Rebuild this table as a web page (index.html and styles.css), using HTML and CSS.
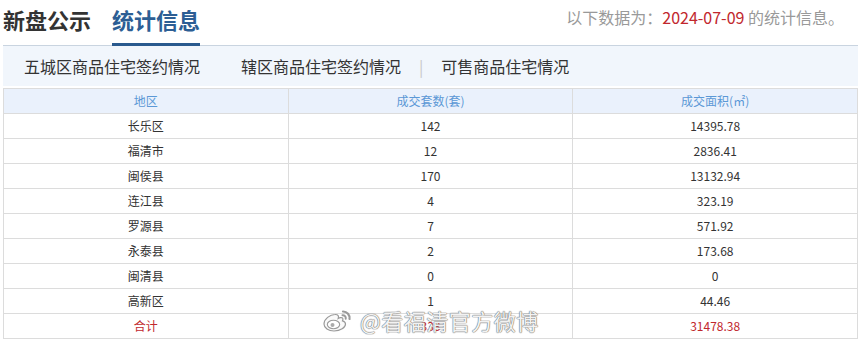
FILE: index.html
```html
<!DOCTYPE html>
<html lang="zh-CN">
<head>
<meta charset="utf-8">
<title>统计信息</title>
<link rel="stylesheet" href="styles.css">
</head>
<body>
<div class="page">
  <div class="head">
    <div class="ht">新盘公示</div>
    <div class="ht active">统计信息</div>
    <div class="info">以下数据为：<span class="date">2024-07-09</span> 的统计信息。</div>
  </div>
  <div class="tabs">
    <span class="tab first">五城区商品住宅签约情况</span>
    <span class="tab second">辖区商品住宅签约情况</span>
    <span class="sep">|</span>
    <span class="tab">可售商品住宅情况</span>
  </div>
  <table class="grid">
    <thead>
      <tr><th>地区</th><th>成交套数(套)</th><th>成交面积(㎡)</th></tr>
    </thead>
    <tbody>
      <tr><td>长乐区</td><td>142</td><td>14395.78</td></tr>
      <tr><td>福清市</td><td>12</td><td>2836.41</td></tr>
      <tr><td>闽侯县</td><td>170</td><td>13132.94</td></tr>
      <tr><td>连江县</td><td>4</td><td>323.19</td></tr>
      <tr><td>罗源县</td><td>7</td><td>571.92</td></tr>
      <tr><td>永泰县</td><td>2</td><td>173.68</td></tr>
      <tr><td>闽清县</td><td>0</td><td>0</td></tr>
      <tr><td>高新区</td><td>1</td><td>44.46</td></tr>
      <tr class="total"><td>合计</td><td>338</td><td>31478.38</td></tr>
    </tbody>
  </table>
  <div class="watermark">
    <svg class="wb" viewBox="0 0 32 26" width="32" height="26" aria-hidden="true">
      <path d="M13 7.5c-5 0-11 4.5-11 9.5 0 4 4.5 7 10 7 6.5 0 11.5-3.5 11.5-7 0-2-1.5-2.8-3-3.2 1-2.2 0.3-3.5-2-3.2-1.2 0.2-2.3 0.8-2.3 0.8 0.8-2.3 0.2-4-3.2-3.9z" fill="#fafafa" stroke="#9a9a9a" stroke-width="1.2"/>
      <ellipse cx="11.5" cy="17.5" rx="6.2" ry="4.2" fill="#fff" stroke="#9a9a9a" stroke-width="1.1"/>
      <circle cx="10.5" cy="18" r="2" fill="#aaa"/>
      <path d="M21 4.5a6.5 6.5 0 0 1 6.5 7.5" fill="none" stroke="#9a9a9a" stroke-width="2.2" stroke-linecap="round"/>
      <path d="M20.5 8.2a3 3 0 0 1 3.2 3.6" fill="none" stroke="#9a9a9a" stroke-width="2" stroke-linecap="round"/>
    </svg>
    <span class="wtext">@看福清官方微博</span>
  </div>
</div>
</body>
</html>
```

FILE: styles.css
```css
* { box-sizing: border-box; }
html, body { margin: 0; padding: 0; background: #fff; }
body {
  font-family: "Microsoft YaHei", "Noto Sans CJK SC", "Noto Sans", sans-serif;
  color: #333;
}
.page {
  position: relative;
  width: 855px;
  margin-left: 3px;
}
.head {
  display: flex;
  align-items: flex-end;
  height: 46px;
  border-bottom: 1px solid #c9d4e0;
}
.ht {
  font-size: 22px;
  line-height: 30px;
  font-weight: bold;
  color: #333;
  padding-bottom: 9px;
  border-bottom: 3px solid transparent;
  margin-bottom: -1px;
  margin-right: 21px;
}
.ht.active {
  color: #2c5e94;
  border-bottom-color: #2a5a8e;
}
.info {
  align-self: flex-start;
  margin-top: 7px;
  margin-left: auto;
  padding-right: 14px;
  font-size: 16px;
  line-height: 20px;
  color: #999;
}
.date { color: #c1272d; }
.tabs {
  display: flex;
  align-items: center;
  height: 40px;
  background: #f1f6fc;
  font-size: 16px;
  color: #333;
}
.tab.first { margin-left: 21px; }
.tab.second { margin-left: 41px; }
.sep {
  color: #c8c8c8;
  margin: 0 18px 0 18px;
  font-size: 16px;
}
.grid {
  margin-top: 2px;
  width: 855px;
  border-collapse: collapse;
  table-layout: fixed;
  font-size: 12px;
}
.grid th, .grid td {
  border: 1px solid #dcdcdc;
  height: 25px;
  padding: 0;
  text-align: center;
  font-weight: normal;
  line-height: 24px;
}
.grid th {
  background: #eaf1fc;
  color: #5b98d6;
}
.grid td { color: #333; }
.grid tr.total td { color: #c1272d; }
.watermark {
  position: absolute;
  left: 319px;
  top: 306px;
  display: flex;
  align-items: center;
  gap: 6px;
  pointer-events: none;
}
.wtext {
  font-size: 22px;
  line-height: 28px;
  color: rgba(255, 255, 255, 0.92);
  text-shadow: 0 0 1px #777, 0 0 1px #777, 0 0 1px #888;
  letter-spacing: 0.5px;
}
```
